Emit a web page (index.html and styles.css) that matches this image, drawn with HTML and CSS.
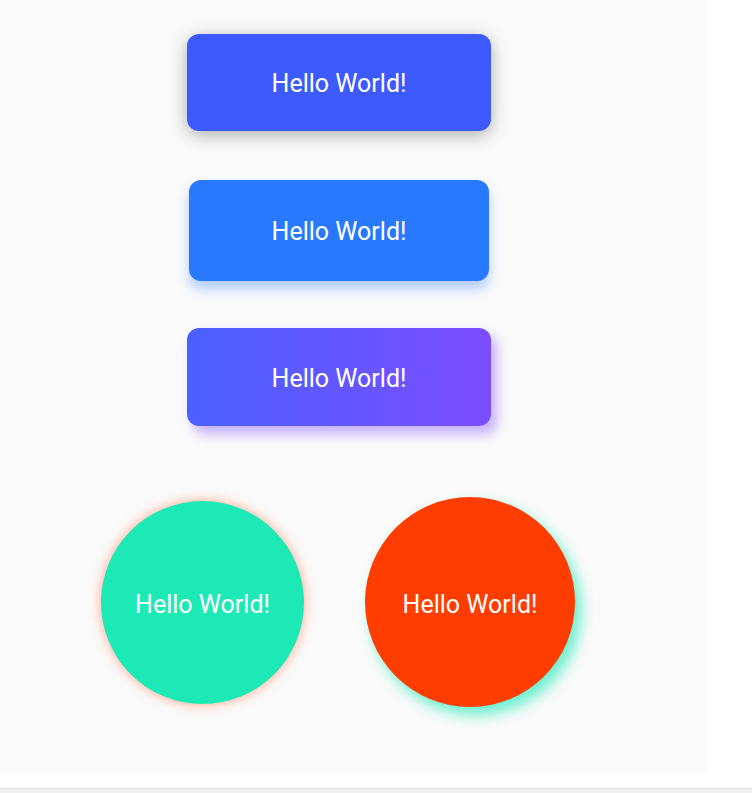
FILE: index.html
```html
<!DOCTYPE html>
<html>
<head>
<meta charset="utf-8">
<link rel="stylesheet" href="styles.css">
</head>
<body>
<div class="page">
  <div class="panel">
    <div class="buttons">
      <div class="btn btn-indigo">Hello World!</div>
      <div class="btn btn-blue">Hello World!</div>
      <div class="btn btn-grad">Hello World!</div>
    </div>
    <div class="circles">
      <div class="circle circle-teal">Hello World!</div>
      <div class="circle circle-orange">Hello World!</div>
    </div>
  </div>
  <div class="gap"></div>
  <div class="bar"></div>
</div>
</body>
</html>
```
FILE: styles.css
```css
html, body {
  margin: 0;
  padding: 0;
  background: #ffffff;
  font-family: Roboto, "Noto Sans", sans-serif;
}
.page {
  width: 752px;
  height: 793px;
  display: flex;
  flex-direction: column;
  overflow: hidden;
}
.panel {
  width: 707px;
  height: 772px;
  background: #fafafa;
  box-sizing: border-box;
  padding-top: 34px;
}
.buttons {
  width: 678px;
  display: flex;
  flex-direction: column;
  align-items: center;
}
.btn {
  display: flex;
  align-items: center;
  justify-content: center;
  color: #ffffff;
  font-size: 25px;
  border-radius: 12px;
  padding-top: 2px;
  box-sizing: border-box;
}
.btn-indigo {
  width: 304px;
  height: 97px;
  background: #3d5afe;
  box-shadow: 0 4px 18px rgba(0, 0, 0, 0.3);
}
.btn-blue {
  margin-top: 49px;
  width: 300px;
  height: 101px;
  background: #2979ff;
  box-shadow: 0 8px 12px rgba(41, 121, 255, 0.35);
}
.btn-grad {
  margin-top: 47px;
  width: 304px;
  height: 98px;
  background: linear-gradient(90deg, #4a60fe 0%, #7b4dff 100%);
  box-shadow: 6px 8px 12px rgba(124, 77, 255, 0.42);
}
.circles {
  margin-top: 71px;
  display: flex;
  align-items: center;
  padding-left: 101px;
  gap: 61px;
}
.circle {
  display: flex;
  align-items: center;
  justify-content: center;
  border-radius: 50%;
  color: #ffffff;
  font-size: 25px;
  padding-top: 4px;
  box-sizing: border-box;
}
.circle-teal {
  width: 203px;
  height: 203px;
  background: #1de9b6;
  box-shadow: 0 0 12px rgba(255, 110, 64, 0.6);
}
.circle-orange {
  width: 210px;
  height: 210px;
  background: #ff3d00;
  box-shadow: 6px 8px 14px rgba(29, 233, 182, 0.65);
}
.gap {
  height: 16px;
  background: #ffffff;
}
.bar {
  flex: 1;
  background: #f0f0f0;
  border-top: 1px solid #e2e2e2;
}
```
